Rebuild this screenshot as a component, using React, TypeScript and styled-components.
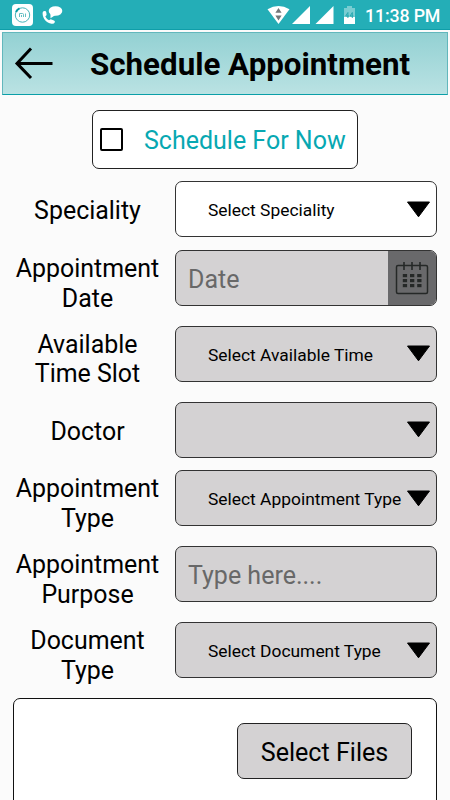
import React from "react";
import styled, { createGlobalStyle } from "styled-components";

const Global = createGlobalStyle`
  * { box-sizing: border-box; }
  html, body { margin: 0; padding: 0; background: #fbfbfb; }
  body { font-family: Roboto, "Liberation Sans", sans-serif; color: #000; }
`;

const Screen = styled.div`
  width: 450px;
  height: 800px;
  overflow: hidden;
  display: flex;
  flex-direction: column;
  background: #fbfbfb;
`;

const StatusBar = styled.div`
  flex: none;
  height: 30px;
  display: flex;
  justify-content: space-between;
  background: #24aeb7;
  border-bottom: 1px solid #0f9ea9;
`;

const Clock = styled.span`
  margin: 4px 0 0 9px;
  width: 75px;
  font-size: 17.8px;
  font-weight: 500;
  line-height: 23px;
  letter-spacing: -0.15px;
  white-space: nowrap;
  color: #fff;
`;

const StatusGroup = styled.div`
  display: flex;
  align-items: flex-start;
  &:last-child { padding-right: 10px; }
`;

const Header = styled.header`
  flex: none;
  display: flex;
  align-items: center;
  height: 63px;
  margin: 2px 2px 0;
  border: 1px solid #62b7bc;
  border-bottom-color: #0b9fa8;
  background: linear-gradient(#93d1d3, #bae2e3);
`;

const Title = styled.h1`
  margin: 3px 0 0 36px;
  font-size: 31.3px;
  font-weight: 700;
  line-height: 38px;
  white-space: nowrap;
`;

const NowOption = styled.label`
  flex: none;
  display: flex;
  align-items: center;
  align-self: flex-start;
  width: 266px;
  height: 59px;
  margin: 15px 0 12.3px 92px;
  padding-left: 8px;
  border: 1px solid #222;
  border-radius: 7px;
  background: #fff;
  color: #07a8b2;
  font-size: 25px;
  white-space: nowrap;
`;

const NowText = styled.span`
  margin-top: 2px;
`;

const CheckBox = styled.span`
  width: 23px;
  height: 23px;
  margin: -1px 21px 0 -1px;
  border: 2px solid #000;
  border-radius: 2px;
`;

const Row = styled.div<{ $tall?: boolean }>`
  flex: none;
  display: flex;
  height: ${(p) => (p.$tall ? 75.8 : 68.8)}px;
`;

const Label = styled.div<{ $tall?: boolean }>`
  width: 175px;
  padding-top: ${(p) => (p.$tall ? 4 : 15)}px;
  font-size: 24.95px;
  line-height: 29.6px;
  text-align: center;
  white-space: pre-line;
`;

const Field = styled.div<{ $white?: boolean }>`
  display: flex;
  align-items: center;
  justify-content: space-between;
  width: 262px;
  height: 56px;
  overflow: hidden;
  border: 1px solid #333;
  border-radius: 7px;
  background: ${(p) => (p.$white ? "#fff" : "#d4d2d3")};
`;

const Choice = styled.span`
  margin: 2px 0 0 32px;
  font-size: 17.4px;
  white-space: nowrap;
`;

const Placeholder = styled.span`
  margin: 2px 0 0 12px;
  font-size: 25px;
  color: #686868;
`;

const Arrow = styled.svg`
  flex: none;
  width: 25px;
  height: 17px;
  margin-right: 5px;
`;

const DateButton = styled.div`
  display: flex;
  align-items: center;
  justify-content: center;
  width: 48px;
  height: 100%;
  background: #69696b;
`;

const Files = styled.section`
  flex: none;
  display: flex;
  justify-content: flex-end;
  width: 424px;
  height: 120px;
  margin-left: 13px;
  padding: 24px 24px 0 0;
  border: 1px solid #111;
  border-radius: 7px;
  background: #fff;
`;

const FilesButton = styled.button`
  width: 175px;
  height: 56px;
  padding: 3px 0 0;
  border: 1px solid #222;
  border-radius: 7px;
  background: #d4d2d3;
  color: #000;
  font-family: inherit;
  font-size: 25.1px;
`;

type Item = { label: string; kind: "select" | "date" | "text"; text: string; white?: boolean };

const items: Item[] = [
  { label: "Speciality", kind: "select", text: "Select Speciality", white: true },
  { label: "Appointment\nDate", kind: "date", text: "Date" },
  { label: "Available\nTime Slot", kind: "select", text: "Select Available Time" },
  { label: "Doctor", kind: "select", text: "" },
  { label: "Appointment\nType", kind: "select", text: "Select Appointment Type" },
  { label: "Appointment\nPurpose", kind: "text", text: "Type here...." },
  { label: "Document\nType", kind: "select", text: "Select Document Type" },
];

const NotificationIcons = () => (
  <svg width="70" height="29" viewBox="0 0 70 29">
    <rect x="12" y="4" width="21" height="22" rx="4" fill="#fff" />
    <circle cx="22.5" cy="15" r="7.2" fill="none" stroke="#48b5bb" strokeWidth="1" />
    <path d="M16 12a7.2 7.2 0 0 1 3.5-3.7" fill="none" stroke="#079ba5" strokeWidth="2" />
    <path d="M19.5 17v-3.5h3q1 0 1 1V17M21.5 15v2M25.5 13.5V17" fill="none" stroke="#66bfc3" strokeWidth="1" />
    <ellipse cx="55.5" cy="11" rx="6.8" ry="4.8" fill="#fff" />
    <path d="M50.5 13v5.2l5-3.2z" fill="#fff" />
    <path d="M43.5 11.3Q46 10.6 46.3 12.5L46.6 15L45.3 16.5Q46.5 19 49 20.2L50.7 19.2L54 20.4Q55.3 21 54.8 22.3Q54 24.2 51.5 23.8C46.5 22.8 42.6 18.5 42.6 13.2Q42.6 11.7 43.5 11.3z" fill="#fff" />
  </svg>
);

const SignalIcons = () => (
  <svg width="90" height="29" viewBox="266 0 90 29">
    <path d="M267.5 9.3Q278.5 2.5 289.5 9.3L278.5 24z" fill="#fff" />
    <path d="M278.5 8l3.1 4.8h-6.2zM278.5 20.5l-3.1-5h6.2z" fill="#73777a" />
    <path d="M310 6v18h-18zM333.5 6v18h-18z" fill="#fff" />
    <path d="M347 6h5v2h3v16h-11V8h3z" fill="#79cdd2" />
    <path d="M344 17h11v7h-11z" fill="#fff" />
    <path d="M347.9 18v-5.5l-2.2 3.5h3.3M352.3 18v-5.5l-2.2 3.5h3.3" fill="none" stroke="#27a9b1" />
  </svg>
);

const BackIcon = () => (
  <svg width="51" height="40" viewBox="2.5 44 51 40">
    <path d="M30.5 48.5L16.5 63.4L30.5 78M16.5 63.4H52" fill="none" stroke="#000" strokeWidth="3" />
  </svg>
);

const CalendarIcon = () => (
  <svg width="34" height="34" viewBox="0 0 34 34">
    <rect x="1.5" y="4.5" width="31" height="28" rx="1.5" fill="none" stroke="#252827" strokeWidth="1.5" />
    <path d="M9 1v8M17 1v8M25 1v8" stroke="#252827" strokeWidth="1.6" />
    {[13, 18, 23].map((y) =>
      [7.8, 15, 22.2].map((x) => <rect key={`${x}-${y}`} x={x} y={y} width="4.3" height="3.2" fill="#252827" />)
    )}
  </svg>
);

const DownArrow = () => (
  <Arrow viewBox="0 0 25 17">
    <path d="M1.5 1h22L12.5 15.8z" stroke="#000" strokeWidth="1" strokeLinejoin="round" />
  </Arrow>
);

export default function App() {
  return (
    <>
      <Global />
      <Screen>
        <StatusBar>
          <StatusGroup><NotificationIcons /></StatusGroup>
          <StatusGroup><SignalIcons /><Clock>11:38 PM</Clock></StatusGroup>
        </StatusBar>
        <Header>
          <BackIcon />
          <Title>Schedule Appointment</Title>
        </Header>
        <NowOption><CheckBox /><NowText>Schedule For Now</NowText></NowOption>
        {items.map((item) => {
          const tall = item.label.includes("\n");
          return (
            <Row key={item.label} $tall={tall}>
              <Label $tall={tall}>{item.label}</Label>
              <Field $white={item.white}>
                {item.kind === "select" ? <Choice>{item.text}</Choice> : <Placeholder>{item.text}</Placeholder>}
                {item.kind === "select" && <DownArrow />}
                {item.kind === "date" && <DateButton><CalendarIcon /></DateButton>}
              </Field>
            </Row>
          );
        })}
        <Files><FilesButton>Select Files</FilesButton></Files>
      </Screen>
    </>
  );
}
